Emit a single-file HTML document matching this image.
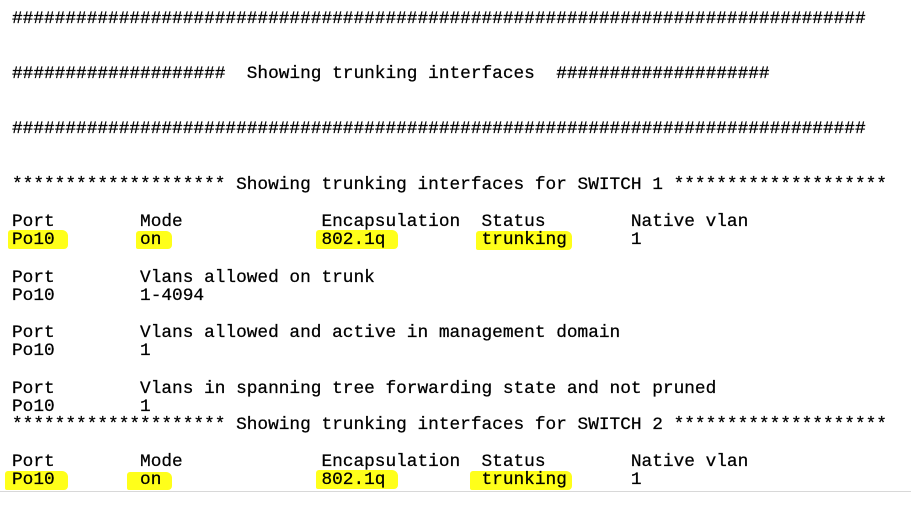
<!DOCTYPE html>
<html><head><meta charset="utf-8"><style>
html,body{margin:0;padding:0;background:#fff;width:911px;height:526px;overflow:hidden;position:relative}
.l{position:absolute;left:12px;white-space:pre;font-family:"Liberation Mono",monospace;font-size:17.8px;line-height:20px;color:#000;height:20px;-webkit-text-stroke:0.25px #000}
.h{position:absolute;background:#ffff1a;border-radius:3px 6px 4px 2px}
.g{position:absolute;left:0;top:491px;width:911px;height:1px;background:#d8d8d8}
</style></head><body>
<div class="h" style="left:8px;top:230px;width:60px;height:19px"></div>
<div class="h" style="left:136px;top:231px;width:36px;height:18px"></div>
<div class="h" style="left:316px;top:230px;width:82px;height:19px"></div>
<div class="h" style="left:476px;top:231px;width:96px;height:19px"></div>
<div class="h" style="left:5px;top:471px;width:63px;height:19px"></div>
<div class="h" style="left:127px;top:472px;width:45px;height:18px"></div>
<div class="h" style="left:316px;top:470px;width:82px;height:19px"></div>
<div class="h" style="left:470px;top:471px;width:102px;height:19px"></div>
<div class="l" style="top:9px">################################################################################</div>
<div class="l" style="top:64px">####################  Showing trunking interfaces  ####################</div>
<div class="l" style="top:119px">################################################################################</div>
<div class="l" style="top:175px">******************** Showing trunking interfaces for SWITCH 1 ********************</div>
<div class="l" style="top:212px">Port        Mode             Encapsulation  Status        Native vlan</div>
<div class="l" style="top:230px">Po10        on               802.1q         trunking      1</div>
<div class="l" style="top:268px">Port        Vlans allowed on trunk</div>
<div class="l" style="top:286px">Po10        1-4094</div>
<div class="l" style="top:323px">Port        Vlans allowed and active in management domain</div>
<div class="l" style="top:341px">Po10        1</div>
<div class="l" style="top:379px">Port        Vlans in spanning tree forwarding state and not pruned</div>
<div class="l" style="top:397px">Po10        1</div>
<div class="l" style="top:415px">******************** Showing trunking interfaces for SWITCH 2 ********************</div>
<div class="l" style="top:452px">Port        Mode             Encapsulation  Status        Native vlan</div>
<div class="l" style="top:470px">Po10        on               802.1q         trunking      1</div>
<div class="g"></div>
</body></html>
